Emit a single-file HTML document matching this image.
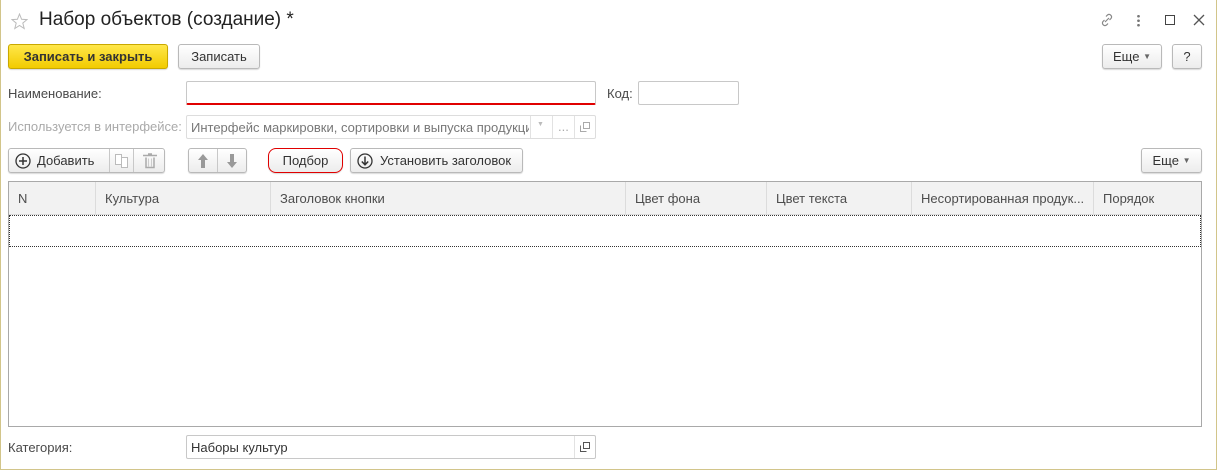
<!DOCTYPE html>
<html><head><meta charset="utf-8"><style>
*{box-sizing:border-box;margin:0;padding:0}
body{width:1217px;height:470px;overflow:hidden;background:#fff;font-family:"Liberation Sans",Arial,sans-serif;font-size:13px;color:#333;position:relative}
.frame{position:absolute;left:0;top:0;width:1217px;height:470px;border:1px solid #d2c58a;border-top:none}
.a{position:absolute}
.btn{position:absolute;height:25px;border:1px solid #b9b9b9;border-radius:3px;background:linear-gradient(#fff,#ececec);box-shadow:0 1px 1px rgba(0,0,0,.15);display:flex;align-items:center;justify-content:center;color:#333;white-space:nowrap}
.inp{position:absolute;height:24px;border:1px solid #c8c8c8;border-radius:2px;background:#fff}
.lbl{position:absolute;color:#4a4a4a;white-space:nowrap}
.th{position:absolute;top:0;height:33px;line-height:33px;padding-left:9px;border-right:1px solid #dcdcdc;color:#4d4d4d;white-space:nowrap;overflow:hidden}
</style></head><body>
<div class="frame"></div>
<svg class="a" style="left:11px;top:13px" width="17" height="17" viewBox="0 0 17 17"><polygon points="8.5,1 10.6,6.3 16,6.6 11.8,10.1 13.2,15.5 8.5,12.5 3.8,15.5 5.2,10.1 1,6.6 6.4,6.3" fill="none" stroke="#bbb" stroke-width="1"/></svg>
<div class="a" style="left:39px;top:9px;font-size:19px;color:#222">Набор объектов (создание) *</div>
<svg class="a" style="left:1099px;top:12px" width="16" height="16" viewBox="0 0 16 16" fill="none" stroke="#888" stroke-width="1.2"><path d="M6 10l4-4M7 4.5l1.5-1.5a2.5 2.5 0 013.5 3.5L10.5 8M9 11.5L7.5 13A2.5 2.5 0 014 9.5L5.5 8"/></svg>
<div class="a" style="left:1137px;top:14px;width:3px;height:13px;background:radial-gradient(circle,#777 1.2px,transparent 1.5px) 0 0/3px 4.5px"></div>
<div class="a" style="left:1165px;top:15px;width:10px;height:10px;border:1.5px solid #444"></div>
<svg class="a" style="left:1193px;top:14px" width="12" height="12"><path d="M1 1L11 11M11 1L1 11" stroke="#555" stroke-width="1.3"/></svg>

<div class="btn" style="left:8px;top:44px;width:160px;background:linear-gradient(#ffe74a,#f2cb00);border-color:#c9a800;color:#333;font-weight:bold">Записать и закрыть</div>
<div class="btn" style="left:178px;top:44px;width:82px">Записать</div>
<div class="btn" style="left:1102px;top:44px;width:60px">Еще&nbsp;<span style="font-size:8px;color:#666">▼</span></div>
<div class="btn" style="left:1172px;top:44px;width:30px">?</div>

<div class="lbl" style="left:8px;top:86px">Наименование:</div>
<div class="inp" style="left:186px;top:81px;width:410px;border-bottom:2px solid #e00000"></div>
<div class="lbl" style="left:607px;top:86px">Код:</div>
<div class="inp" style="left:638px;top:81px;width:101px"></div>

<div class="lbl" style="left:8px;top:119px;color:#aaa">Используется в интерфейсе:</div>
<div class="inp" style="left:186px;top:115px;width:410px;border-color:#ddd">
 <div class="a" style="left:4px;top:4px;color:#777;white-space:nowrap;width:338px;overflow:hidden">Интерфейс маркировки, сортировки и выпуска продукции</div>
 <div class="a" style="left:343px;top:0;width:1px;height:22px;background:#e2e2e2"></div>
 <div class="a" style="left:350px;top:5px;font-size:7px;color:#bbb">▼</div>
 <div class="a" style="left:365px;top:0;width:1px;height:22px;background:#e2e2e2"></div>
 <div class="a" style="left:371px;top:3px;color:#aaa">...</div>
 <div class="a" style="left:387px;top:0;width:1px;height:22px;background:#e2e2e2"></div>
 <svg class="a" style="left:393px;top:6px" width="10" height="10"><path d="M3.5 .5h6v6h-6zM.5 3.5v6h6" fill="none" stroke="#aaa"/></svg>
</div>

<div class="btn" style="left:8px;top:148px;width:157px;justify-content:flex-start">
 <svg style="margin-left:6px" width="16" height="16"><circle cx="8" cy="8" r="7" fill="none" stroke="#333" stroke-width="1.3"/><path d="M8 4v8M4 8h8" stroke="#333" stroke-width="1.5"/></svg>
 <span style="margin-left:6px">Добавить</span>
 <div class="a" style="left:100px;top:0;width:1px;height:23px;background:#c8c8c8"></div>
 <svg class="a" style="left:105px;top:4px" width="16" height="16"><path d="M1.5 1.5h6v10h-6zM7.5 4.5h6v10h-6z" fill="#fff" stroke="#bbb"/></svg>
 <div class="a" style="left:124px;top:0;width:1px;height:23px;background:#c8c8c8"></div>
 <svg class="a" style="left:133px;top:4px" width="16" height="16"><path d="M1 2.5h14M4 4.5v10h8v-10M6 1h4" fill="none" stroke="#aaa" stroke-width="1.5"/><path d="M6.5 5.5v8M9.5 5.5v8" stroke="#ccc"/></svg>
</div>
<div class="btn" style="left:188px;top:148px;width:59px">
 <svg class="a" style="left:8px;top:4px" width="12" height="16"><path d="M6 1L1 7h3v8h4V7h3z" fill="#999"/></svg>
 <div class="a" style="left:28px;top:0;width:1px;height:23px;background:#c8c8c8"></div>
 <svg class="a" style="left:37px;top:4px" width="12" height="16"><path d="M6 15L1 9h3V1h4v8h3z" fill="#999"/></svg>
</div>
<div class="btn" style="left:268px;top:148px;width:75px;border:1.5px solid #e00000;border-radius:8px">Подбор</div>
<div class="btn" style="left:350px;top:148px;width:173px;justify-content:flex-start">
 <svg style="margin-left:6px" width="16" height="16"><circle cx="8" cy="8" r="7" fill="none" stroke="#333" stroke-width="1.3"/><path d="M8 3.5v8M4.8 8.5L8 11.8 11.2 8.5" fill="none" stroke="#333" stroke-width="1.5"/></svg>
 <span style="margin-left:7px">Установить заголовок</span>
</div>
<div class="btn" style="left:1141px;top:148px;width:61px">Еще&nbsp;<span style="font-size:8px;color:#666">▼</span></div>

<div class="a" style="left:8px;top:181px;width:1194px;height:246px;border:1px solid #a9a9a9">
 <div class="a" style="left:0;top:0;width:1192px;height:33px;background:#f2f2f2;border-bottom:1px solid #dcdcdc">
  <div class="th" style="left:0;width:87px">N</div>
  <div class="th" style="left:87px;width:175px">Культура</div>
  <div class="th" style="left:262px;width:355px">Заголовок кнопки</div>
  <div class="th" style="left:617px;width:141px">Цвет фона</div>
  <div class="th" style="left:758px;width:145px">Цвет текста</div>
  <div class="th" style="left:903px;width:182px">Несортированная продук...</div>
  <div class="th" style="left:1085px;width:107px;border-right:none">Порядок</div>
 </div>
 <div class="a" style="left:0;top:33px;width:1192px;height:32px;border:1px dotted #333"></div>
</div>

<div class="lbl" style="left:8px;top:440px">Категория:</div>
<div class="inp" style="left:186px;top:435px;width:410px">
 <div class="a" style="left:4px;top:4px;color:#333">Наборы культур</div>
 <div class="a" style="left:387px;top:0;width:1px;height:22px;background:#e2e2e2"></div>
 <svg class="a" style="left:393px;top:6px" width="10" height="10"><path d="M3.5 .5h6v6h-6zM.5 3.5v6h6" fill="none" stroke="#555"/></svg>
</div>
</body></html>
